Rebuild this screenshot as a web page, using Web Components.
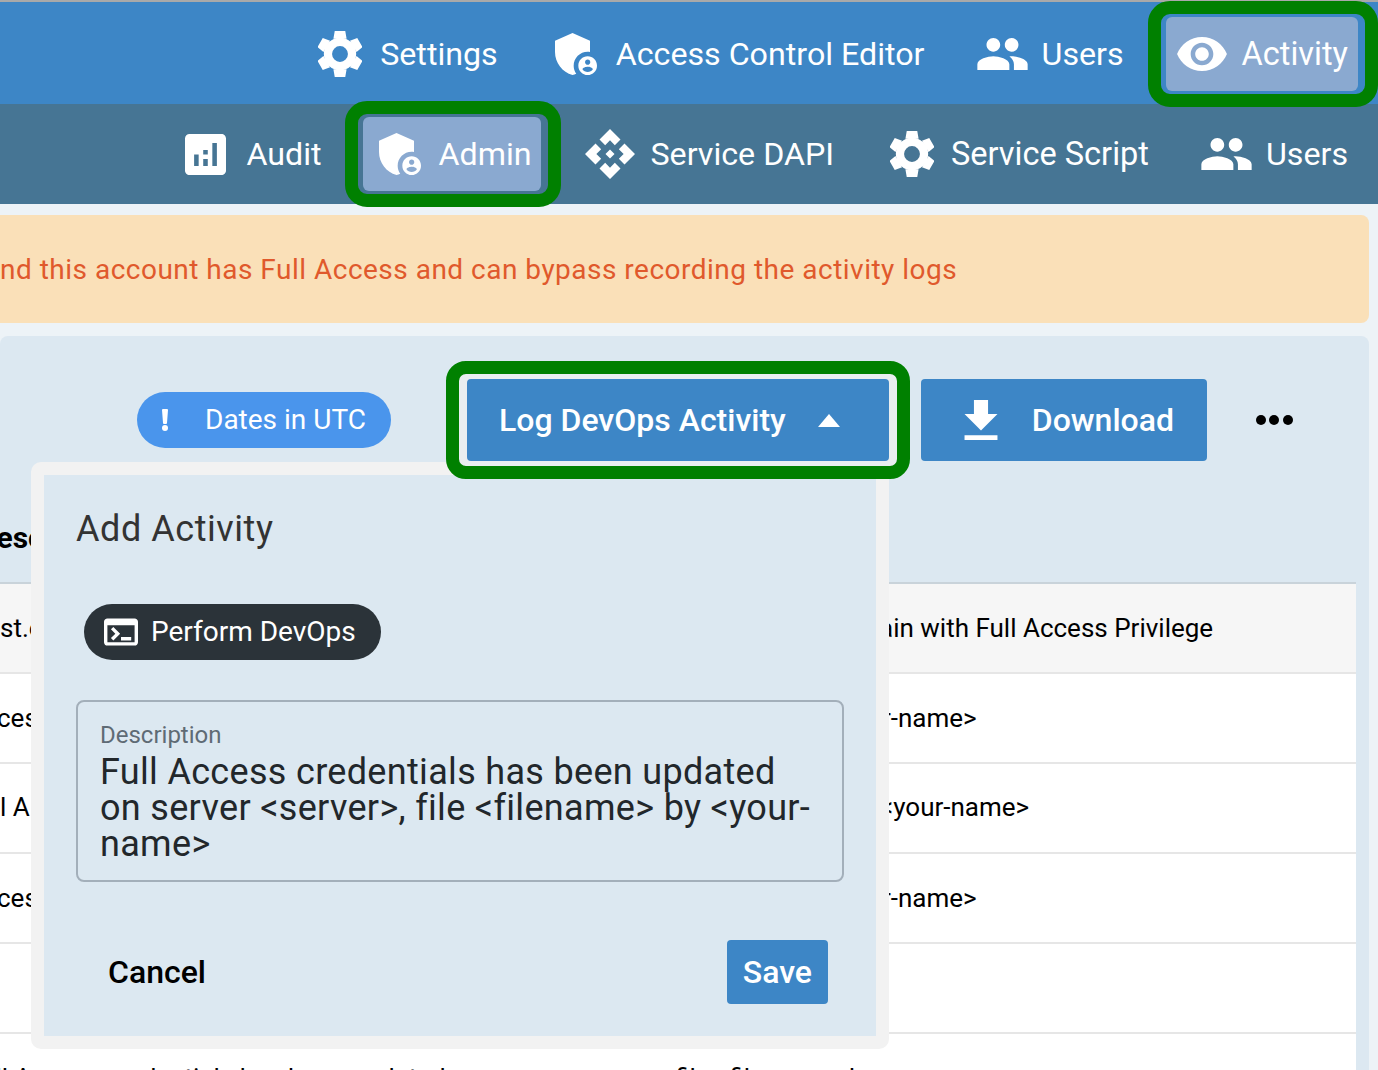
<!DOCTYPE html>
<html lang="en">
<head>
<meta charset="utf-8">
<title>Activity</title>
<style>
  html, body { margin: 0; height: 1070px; overflow: hidden; }
  body { width: 1378px; background: #edf3f7; font-family: Roboto, "Liberation Sans", sans-serif; }
</style>
</head>
<body>
<app-shell></app-shell>

<script>
const ICONS = {
  gear: `<svg viewBox="0 0 46 48" fill="#fff"><circle cx="23" cy="24" r="12.6" fill="none" stroke="#fff" stroke-width="8.6"/><path d="M17.5 0h11l1.4 8h-13.8zM17.5 48h11l1.4-8h-13.8z"/><path transform="rotate(60 23 24)" d="M17.5 0h11l1.4 8h-13.8zM17.5 48h11l1.4-8h-13.8z"/><path transform="rotate(120 23 24)" d="M17.5 0h11l1.4 8h-13.8zM17.5 48h11l1.4-8h-13.8z"/></svg>`,
  shield: `<svg viewBox="3 3 18 18" fill="#fff"><path d="M17,11c0.34,0,0.67,0.04,1,0.09V6.27L10.5,3L3,6.27v4.91c0,4.54,3.2,8.79,7.5,9.82c0.55-0.13,1.08-0.32,1.6-0.55C11.41,19.47,11,18.28,11,17C11,13.69,13.69,11,17,11z"/><path d="M17,13c-2.21,0-4,1.79-4,4c0,2.21,1.79,4,4,4s4-1.79,4-4C21,14.79,19.21,13,17,13z M17,14.38c0.62,0,1.12,0.51,1.12,1.12s-0.51,1.12-1.12,1.12s-1.12-0.51-1.12-1.12S16.38,14.38,17,14.38z M17,19.75c-0.93,0-1.74-0.46-2.24-1.17c0.05-0.72,1.51-1.08,2.24-1.08s2.19,0.36,2.24,1.08C18.74,19.29,17.93,19.75,17,19.75z"/></svg>`,
  people: `<svg viewBox="1 5 22 14" fill="#fff"><path d="M16 11c1.66 0 2.99-1.34 2.99-3S17.66 5 16 5c-1.66 0-3 1.34-3 3s1.34 3 3 3zm-8 0c1.66 0 2.99-1.34 2.99-3S9.66 5 8 5C6.34 5 5 6.34 5 8s1.34 3 3 3zm0 2c-2.33 0-7 1.17-7 3.5V19h14v-2.5c0-2.33-4.67-3.5-7-3.5zm8 0c-.29 0-.62.02-.97.05 1.16.84 1.97 1.97 1.97 3.45V19h6v-2.5c0-2.33-4.67-3.5-7-3.5z"/></svg>`,
  eye: `<svg viewBox="1 4.5 22 15" fill="#fff"><path d="M12 4.5C7 4.5 2.73 7.61 1 12c1.73 4.39 6 7.5 11 7.5s9.27-3.11 11-7.5c-1.73-4.39-6-7.5-11-7.5zM12 17c-2.76 0-5-2.24-5-5s2.24-5 5-5 5 2.24 5 5-2.24 5-5 5zm0-8c-1.66 0-3 1.34-3 3s1.34 3 3 3 3-1.34 3-3-1.34-3-3-3z"/></svg>`,
  audit: `<svg viewBox="3 3 18 18" fill="#fff"><path d="M19,3H5C3.9,3,3,3.9,3,5v14c0,1.1,0.9,2,2,2h14c1.1,0,2-0.9,2-2V5C21,3.9,20.1,3,19,3z M9,17H7v-5h2V17z M13,17h-2v-3h2V17z M13,12h-2v-2h2V12z M17,17h-2V7h2V17z"/></svg>`,
  api: `<svg viewBox="1 1 22 22" fill="#fff"><path d="M14,12l-2,2l-2-2l2-2L14,12z M12,6l2.12,2.12l2.5-2.5L12,1L7.38,5.62l2.5,2.5L12,6z M6,12l2.12-2.12l-2.5-2.5L1,12l4.62,4.62l2.5-2.5L6,12z M18,12l-2.12,2.12l2.5,2.5L23,12l-4.62-4.62l-2.5,2.5L18,12z M12,18l-2.12-2.12l-2.5,2.5L12,23l4.62-4.62l-2.5-2.5L12,18z"/></svg>`,
  terminal: `<svg viewBox="2 4 20 16" fill="#fff"><path d="M20,4H4C2.89,4,2,4.9,2,6v12c0,1.1,0.89,2,2,2h16c1.1,0,2-0.9,2-2V6C22,4.9,21.11,4,20,4z M20,18H4V8h16V18z M18,17h-6v-2h6V17z M7.5,17l-1.41-1.41L8.67,13l-2.59-2.59L7.5,9l4,4L7.5,17z"/></svg>`,
  download: `<svg viewBox="5 3 14 17" fill="#fff"><path d="M19 9h-4V3H9v6H5l7 7 7-7zM5 18v2h14v-2H5z"/></svg>`,
  bang: `<svg viewBox="0 0 6 22" fill="#fff"><path d="M0 1a1 1 0 0 1 1-1h4a1 1 0 0 1 1 1l-1 13a1 1 0 0 1-1 1H2a1 1 0 0 1-1-1z"/><circle cx="3" cy="19" r="3"/></svg>`,
}

const ICON_SIZE = {
  gear: [44, 46], shield: [42, 42], people: [51, 32], eye: [50, 34],
  audit: [41, 41], api: [50, 50], terminal: [34, 28], download: [34, 40], bang: [6, 22],
}

function iconFor(name) {
  const [w, h] = ICON_SIZE[name]
  return ICONS[name].replace("<svg ", `<svg width="${w}" height="${h}" `)
}

class NavBar extends HTMLElement {
  constructor() {
    super()
    this.attachShadow({ mode: "open" }).innerHTML = `
      <style>
        :host { display: flex; justify-content: flex-end; align-items: center; box-sizing: border-box; padding: var(--bar-top, 0) 20px 0 0; height: var(--bar-height); background: var(--bar-color); }
      </style>
      <slot></slot>`
  }
}

class NavItem extends HTMLElement {
  constructor() {
    super()
    this.attachShadow({ mode: "open" }).innerHTML = `
      <style>
        :host { display: flex; position: relative; flex: none; align-items: center; box-sizing: border-box; height: 74px; padding: 0 10px 0 var(--pl, 10px); margin-left: var(--ml, 32px); gap: var(--gap, 16px); border-radius: 6px; color: #fff; font-size: var(--fs, 32px); white-space: nowrap; }
        :host([active]) { background: #8aa9d0; }
        svg { display: block; flex: none; }
        .ring { display: none; position: absolute; top: -16px; bottom: -16px; left: -18px; right: -20px; border: 13px solid #008000; border-radius: 22px; z-index: 5; pointer-events: none; }
        :host([active]) .ring { display: block; }
      </style>
      ${iconFor(this.getAttribute("icon"))}
      <span><slot></slot></span>
      <span class="ring"></span>`
  }
}

class AlertBanner extends HTMLElement {
  constructor() {
    super()
    this.attachShadow({ mode: "open" }).innerHTML = `
      <style>
        :host { display: flex; align-items: center; box-sizing: border-box; height: 108px; margin: 11px 9px 13px -20px; padding: 0 0 0 20px; border-radius: 8px; background: #fae0b8; color: #e0592c; font-size: 28px; letter-spacing: .49px; white-space: nowrap; }
      </style>
      <slot></slot>`
  }
}

class ToolButton extends HTMLElement {
  constructor() {
    super()
    const icon = this.getAttribute("icon")
    this.attachShadow({ mode: "open" }).innerHTML = `
      <style>
        :host { display: block; position: relative; flex: none; color: #fff; font-size: 32px; font-weight: 500; white-space: nowrap; }
        .btn { display: flex; position: relative; z-index: 1; align-items: center; box-sizing: border-box; height: 82px; padding: var(--pad); gap: var(--gap); border-radius: 4px; background: #3d86c6; }
        .ring { display: none; position: absolute; top: -18px; bottom: -18px; left: -21px; right: -21px; border: 13px solid #008000; border-radius: 20px; background: #e9eef0; }
        :host([ringed]) .ring { display: block; }
        .caret { width: 0; height: 0; border: 11px solid transparent; border-top: 0; border-bottom: 13px solid #fff; }
        svg { display: block; }
      </style>
      <span class="ring"></span>
      <div class="btn">
        ${icon ? iconFor(icon) : ""}
        <span><slot></slot></span>
        ${this.hasAttribute("caret") ? `<span class="caret"></span>` : ""}
      </div>`
  }
}

class DatesPill extends HTMLElement {
  constructor() {
    super()
    this.attachShadow({ mode: "open" }).innerHTML = `
      <style>
        :host { display: flex; flex: none; align-items: center; box-sizing: border-box; width: 254px; height: 56px; padding-left: 25px; gap: 37px; border-radius: 28px; background: #4a95ec; color: #fff; font-size: 28px; white-space: nowrap; }
        svg { display: block; }
        span { margin-bottom: 2px; }
      </style>
      ${iconFor("bang")}
      <span><slot></slot></span>`
  }
}

class ActivityToolbar extends HTMLElement {
  constructor() {
    super()
    this.attachShadow({ mode: "open" }).innerHTML = `
      <style>
        :host { display: flex; position: relative; z-index: 7; align-items: center; box-sizing: border-box; height: 125px; padding: 43px 0 0 137px; }
        .dots { display: flex; flex: none; gap: 3.5px; margin-left: 49px; }
        .dots i { width: 10px; height: 10px; border-radius: 50%; background: #000; }
        ::slotted(dates-pill) { margin-right: 76px; }
        ::slotted(tool-button:last-child) { margin-left: 32px; }
      </style>
      <slot></slot>
      <div class="dots"><i></i><i></i><i></i></div>`
  }
}

class TableHead extends HTMLElement {
  constructor() {
    super()
    this.attachShadow({ mode: "open" }).innerHTML = `
      <style>
        :host { display: flex; align-items: center; box-sizing: border-box; height: 124px; padding-top: 33px; margin-top: -1px; border-bottom: 2px solid #c9d3da; color: #000; font-size: 30px; font-weight: 700; white-space: nowrap; }
        span { margin-left: -23px; }
      </style>
      <span><slot></slot></span>`
  }
}

class TableRow extends HTMLElement {
  constructor() {
    super()
    this.attachShadow({ mode: "open" }).innerHTML = `
      <style>
        :host { display: grid; grid-template-columns: 880px 1fr; align-items: center; box-sizing: border-box; height: 90px; border-bottom: 2px solid #e6e6e6; background: #fff; color: #000; font-size: 26px; white-space: nowrap; }
        :host([shaded]) { background: #f6f6f6; }
        .start { margin-left: var(--from, 0); }
        .end { margin-left: var(--to, 0); }
      </style>
      <span class="start"><slot name="start"></slot></span>
      <span class="end"><slot name="end"></slot></span>`
  }
}

class ActivityPopup extends HTMLElement {
  constructor() {
    super()
    this.attachShadow({ mode: "open" }).innerHTML = `
      <style>
        :host { display: block; position: absolute; z-index: 6; left: 31px; top: 126px; box-sizing: border-box; width: 858px; height: 587px; border: 13px solid #f2f2f2; border-radius: 10px; background: #dce8f1; }
        .inner { display: flex; flex-direction: column; box-sizing: border-box; height: 100%; padding: 30px 32px 32px; }
        h2 { margin: 0 0 51px; font-size: 36px; font-weight: 400; line-height: 48px; letter-spacing: .55px; color: #333; }
        .chip { display: flex; align-self: flex-start; align-items: center; box-sizing: border-box; height: 56px; margin: 0 0 40px 8px; padding: 0 25px 0 20px; gap: 13px; border-radius: 28px; background: #2b3339; color: #fff; font-size: 28px; }
        .chip span { margin-bottom: 2px; }
        svg { display: block; }
        .field { box-sizing: border-box; height: 182px; padding: 16px 22px 0; border: 2px solid #a3afba; border-radius: 8px; }
        .field label { display: block; margin: -1px 0 1px; font-size: 24px; line-height: 36px; color: #5f6b75; }
        .field div { font-size: 36px; line-height: 36px; letter-spacing: .32px; color: #22272b; }
        .actions { display: flex; justify-content: space-between; align-items: center; margin: auto 16px 0 32px; font-size: 32px; font-weight: 500; }
        .save { display: flex; align-items: center; height: 64px; padding: 0 16px; border-radius: 4px; background: #3d86c6; color: #fff; }
        .cancel { color: #000; }
      </style>
      <div class="inner">
        <h2>Add Activity</h2>
        <div class="chip">${iconFor("terminal")}<span>Perform DevOps</span></div>
        <div class="field">
          <label>Description</label>
          <div>Full Access credentials has been updated on server &lt;server&gt;, file &lt;filename&gt; by &lt;your-name&gt;</div>
        </div>
        <div class="actions"><span class="cancel">Cancel</span><span class="save">Save</span></div>
      </div>`
  }
}

class ActivityCard extends HTMLElement {
  constructor() {
    super()
    this.attachShadow({ mode: "open" }).innerHTML = `
      <style>
        :host { display: block; position: relative; height: 734px; margin-right: 9px; overflow: hidden; border-radius: 8px 8px 0 0; background: #dce8f1; }
        .table { margin-right: 13px; }
      </style>
      <slot name="toolbar"></slot>
      <slot name="popup"></slot>
      <div class="table"><slot></slot></div>`
  }
}

class AppShell extends HTMLElement {
  constructor() {
    super()
    this.attachShadow({ mode: "open" }).innerHTML = `
      <style>
        :host { display: block; border-top: 2px solid #a9a9a9; }
      </style>
      <nav-bar style="--bar-height:102px; --bar-top:2px; --bar-color:#3d86c6; --fs:32.2px">
        <nav-item icon="gear" style="--gap:18px">Settings</nav-item>
        <nav-item icon="shield" style="--gap:19px; --ml:37px">Access Control Editor</nav-item>
        <nav-item icon="people" style="--gap:14px">Users</nav-item>
        <nav-item icon="eye" active style="--gap:15px; --pl:11px; --fs:32.5px">Activity</nav-item>
      </nav-bar>
      <nav-bar style="--bar-height:100px; --bar-color:#467594; --fs:32.2px">
        <nav-item icon="audit" style="--gap:20px">Audit</nav-item>
        <nav-item icon="shield" active style="--gap:18px; --pl:16px; --ml:31px">Admin</nav-item>
        <nav-item icon="api" style="--gap:15px; --ml:34px">Service DAPI</nav-item>
        <nav-item icon="gear" style="--gap:17px; --ml:36px; --fs:32.5px">Service Script</nav-item>
        <nav-item icon="people" style="--gap:14px; --ml:32px">Users</nav-item>
      </nav-bar>
      <alert-banner>nd this account has Full Access and can bypass recording the activity logs</alert-banner>
      <activity-card>
        <activity-toolbar slot="toolbar">
          <dates-pill>Dates in UTC</dates-pill>
          <tool-button ringed caret style="--pad:0 49px 0 32px; --gap:32px">Log DevOps Activity</tool-button>
          <tool-button icon="download" style="--pad:0 33px 0 43px; --gap:34px">Download</tool-button>
        </activity-toolbar>
        <activity-popup slot="popup"></activity-popup>
        <table-head>Desc</table-head>
        <table-row shaded style="--to:-1px">
          <span slot="start">st.e</span>
          <span slot="end">ain with Full Access Privilege</span>
        </table-row>
        <table-row style="--from:-3px; --to:2px">
          <span slot="start">ces</span>
          <span slot="end">r-name&gt;</span>
        </table-row>
        <table-row style="padding-bottom:3px">
          <span slot="start">l A</span>
          <span slot="end">&lt;your-name&gt;</span>
        </table-row>
        <table-row style="--from:-3px; --to:2px">
          <span slot="start">ces</span>
          <span slot="end">r-name&gt;</span>
        </table-row>
        <table-row></table-row>
        <table-row style="--from:-33px">
          <span slot="start">Full Access credentials has been updated on server &lt;server&gt;, file &lt;filename&gt; by &lt;your-name&gt;</span>
        </table-row>
      </activity-card>`
  }
}

customElements.define("nav-bar", NavBar)
customElements.define("nav-item", NavItem)
customElements.define("alert-banner", AlertBanner)
customElements.define("tool-button", ToolButton)
customElements.define("dates-pill", DatesPill)
customElements.define("activity-toolbar", ActivityToolbar)
customElements.define("table-head", TableHead)
customElements.define("table-row", TableRow)
customElements.define("activity-popup", ActivityPopup)
customElements.define("activity-card", ActivityCard)
customElements.define("app-shell", AppShell)
</script>
</body>
</html>
